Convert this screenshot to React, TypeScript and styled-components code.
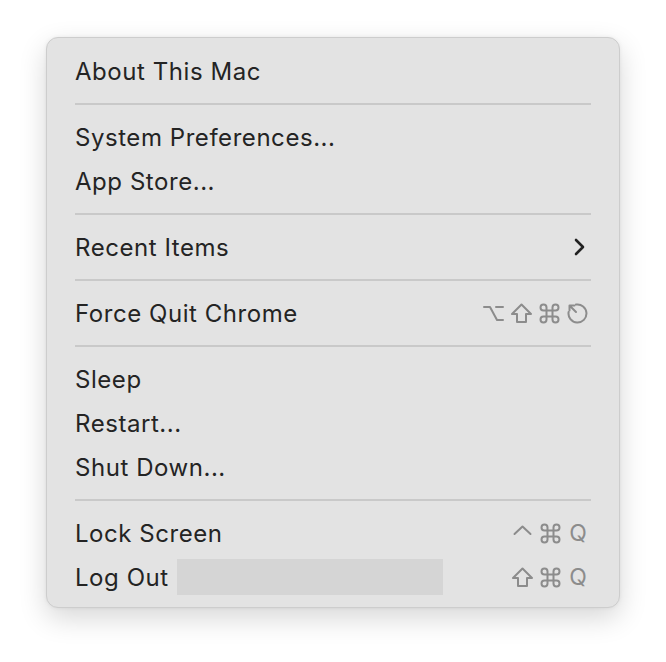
import React from "react";
import styled, { createGlobalStyle } from "styled-components";

const GlobalStyle = createGlobalStyle`
  html, body {
    margin: 0;
    padding: 0;
    background: #ffffff;
  }
  body {
    font-family: Inter, "Noto Sans", "Liberation Sans", sans-serif;
  }
`;

const Page = styled.div`
  width: 666px;
  height: 662px;
  padding: 37px 0 0 46px;
  box-sizing: border-box;
`;

const Menu = styled.div`
  width: 574px;
  box-sizing: border-box;
  padding: 11px 28px 8px 28px;
  background: #e3e3e3;
  border: 1px solid #cdcdcd;
  border-radius: 12px;
  box-shadow: 0 10px 28px rgba(0, 0, 0, 0.16), 0 0 4px rgba(0, 0, 0, 0.06);
  display: flex;
  flex-direction: column;
`;

const Row = styled.div`
  height: 44px;
  display: flex;
  align-items: center;
  justify-content: space-between;
`;

const Label = styled.span`
  display: flex;
  align-items: center;
  font-size: 24px;
  color: #242424;
  letter-spacing: 0.55px;
`;

const Redacted = styled.span`
  display: inline-block;
  width: 266px;
  height: 36px;
  margin-left: 8px;
  background: #d5d5d5;
`;

const Separator = styled.div`
  height: 22px;
  display: flex;
  align-items: center;
  &::after {
    content: "";
    flex: 1;
    height: 2px;
    background: #c9c9c9;
  }
`;

const Keys = styled.span`
  display: flex;
  align-items: center;
  gap: 7px;
  margin-right: 3px;
  color: #8c8c8c;
`;

const KeyLetter = styled.span`
  font-size: 23px;
  color: #8c8c8c;
  width: 20px;
  text-align: center;
`;

const Icon = styled.svg`
  width: 21px;
  height: 21px;
  display: block;
  fill: none;
  stroke: currentColor;
  stroke-width: 2;
  stroke-linejoin: round;
  stroke-linecap: round;
`;

const Chevron = styled.svg`
  width: 14px;
  height: 18px;
  margin-right: 5px;
  fill: none;
  stroke: #222;
  stroke-width: 2.6;
  stroke-linecap: round;
  stroke-linejoin: round;
`;

const Option = () => (
  <Icon viewBox="0 0 21 21">
    <path d="M1 4h6l7 13h6M13 4h7" />
  </Icon>
);

const Shift = () => (
  <Icon viewBox="0 0 21 21">
    <path d="M10.5 1.5L1 11h5v8h9v-8h5z" />
  </Icon>
);

const Command = () => (
  <Icon viewBox="0 0 21 21">
    <path d="M7.5 7.5v6M13.5 7.5v6M7.5 7.5h6M7.5 13.5h6M7.5 7.5H4.5a3 3 0 1 1 3-3zM13.5 7.5V4.5a3 3 0 1 1 3 3zM7.5 13.5v3a3 3 0 1 1-3-3zM13.5 13.5h3a3 3 0 1 1-3 3z" />
  </Icon>
);

const Escape = () => (
  <Icon viewBox="0 0 21 21">
    <path d="M9 1.6A9 9 0 1 1 1.6 9" />
    <path d="M2.5 2.5l6.5 6.5M2.5 2.5v5M2.5 2.5h5" />
  </Icon>
);

const Control = () => (
  <Icon viewBox="0 0 21 21">
    <path d="M2.5 11l8-7.5 8 7.5" />
  </Icon>
);

type Item = { label: string; keys?: React.ReactNode; submenu?: boolean; redacted?: boolean } | "sep";

const items: Item[] = [
  { label: "About This Mac" },
  "sep",
  { label: "System Preferences..." },
  { label: "App Store..." },
  "sep",
  { label: "Recent Items", submenu: true },
  "sep",
  {
    label: "Force Quit Chrome",
    keys: (
      <>
        <Option />
        <Shift />
        <Command />
        <Escape />
      </>
    ),
  },
  "sep",
  { label: "Sleep" },
  { label: "Restart..." },
  { label: "Shut Down..." },
  "sep",
  {
    label: "Lock Screen",
    keys: (
      <>
        <Control />
        <Command />
        <KeyLetter>Q</KeyLetter>
      </>
    ),
  },
  {
    label: "Log Out",
    redacted: true,
    keys: (
      <>
        <Shift />
        <Command />
        <KeyLetter>Q</KeyLetter>
      </>
    ),
  },
];

export default function App() {
  return (
    <>
      <GlobalStyle />
      <Page>
        <Menu>
          {items.map((item, idx) => {
            if (item === "sep") return <Separator key={idx} />;
            return (
              <Row key={idx}>
                <Label>
                  {item.label}
                  {item.redacted && <Redacted />}
                </Label>
                {item.keys && <Keys>{item.keys}</Keys>}
                {item.submenu && (
                  <Chevron viewBox="0 0 14 18">
                    <path d="M4 2l7 7-7 7" />
                  </Chevron>
                )}
              </Row>
            );
          })}
        </Menu>
      </Page>
    </>
  );
}
